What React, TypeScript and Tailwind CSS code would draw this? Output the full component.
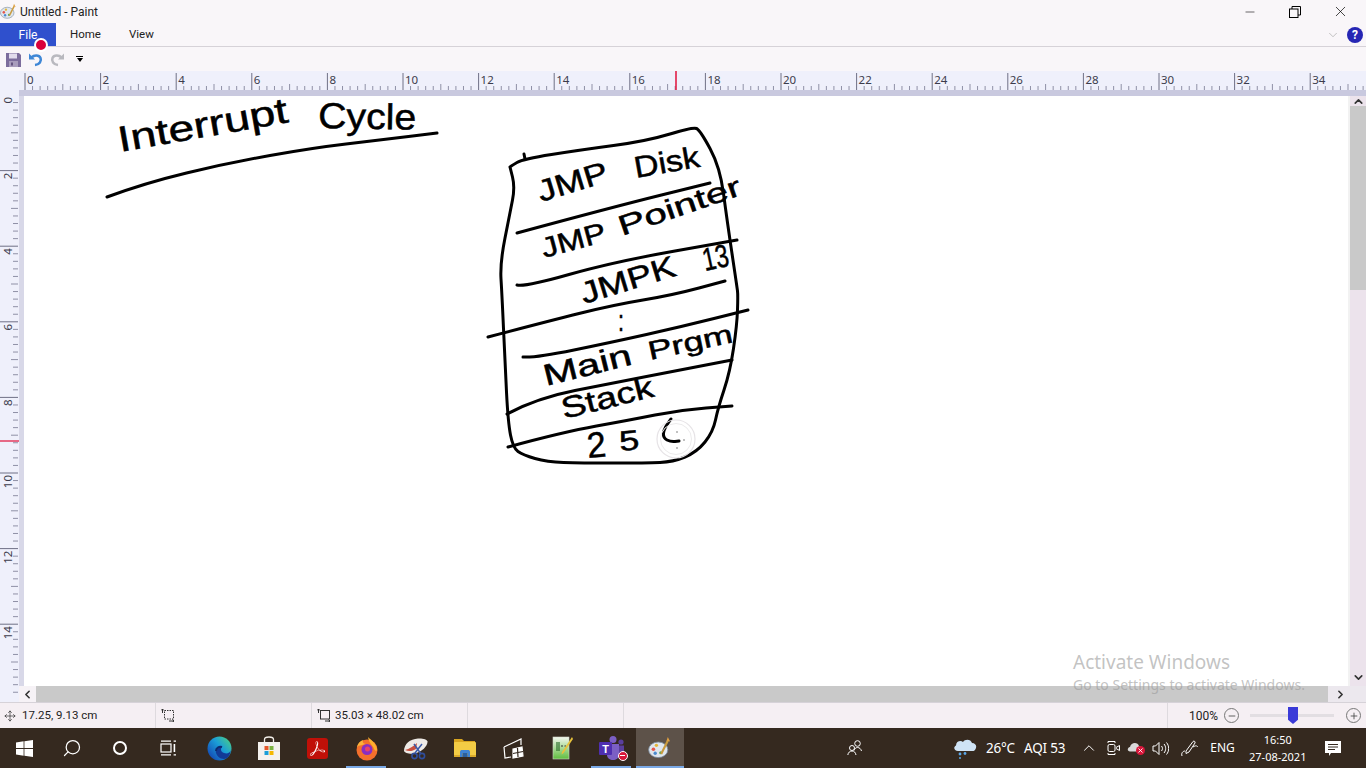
import { ChevronDown, ChevronLeft, ChevronRight, ChevronUp, Minus, Move, Plus, Search, X } from "lucide-react";
import { SiAdobeacrobatreader } from "react-icons/si";

type Pt = [number, number];

const uiFont = "font-['Noto_Sans',sans-serif]";
const chromeFont = "font-['Roboto',sans-serif]";
const PX_PER_CM = 37.8;

/** Ink strokes on the canvas (page coordinates). */
const strokes: Pt[][] = [
  // title underline
  [[107, 197], [145, 183], [228, 163], [312, 148], [380, 140], [437, 133]],
  // box outline
  [[510, 167], [511, 166], [523, 159], [580, 150], [647, 141], [693, 127], [700, 130], [720, 167], [727, 220], [737, 287], [738, 295], [737, 325], [730, 372], [718, 408], [713, 432], [697, 452], [673, 462], [647, 463], [580, 463], [547, 462], [523, 455], [513, 448], [508, 422], [505, 362], [502, 295], [500, 263], [510, 213], [515, 187], [510, 167]],
  [[524, 154], [525, 159]],
  // shelves
  [[517, 233], [613, 207], [710, 183]],
  [[517, 285], [525, 287], [613, 262], [737, 240]],
  [[488, 337], [545, 322], [613, 305], [673, 295], [725, 281]],
  [[523, 357], [535, 358], [613, 342], [680, 327], [748, 310]],
  [[507, 414], [537, 398], [613, 383], [680, 370], [732, 360]],
  [[508, 447], [563, 432], [630, 420], [680, 410], [732, 406]],
];

/** Handwritten words, as real text fitted to where they sit on the canvas. */
const words: { t: string; x: number; y: number; w: number; s: number; r: number }[] = [
  { t: "Interrupt", x: 120, y: 152, w: 172, s: 36, r: -10 },
  { t: "Cycle", x: 318, y: 128, w: 98, s: 36, r: 1 },
  { t: "JMP", x: 541, y: 202, w: 72, s: 30, r: -17 },
  { t: "Disk", x: 636, y: 178, w: 66, s: 30, r: -10 },
  { t: "JMP", x: 544, y: 258, w: 66, s: 28, r: -15 },
  { t: "Pointer", x: 622, y: 236, w: 128, s: 28, r: -19 },
  { t: "JMPK", x: 584, y: 304, w: 98, s: 30, r: -17 },
  { t: "13", x: 705, y: 271, w: 26, s: 32, r: -12 },
  { t: ":", x: 618, y: 331, w: 6, s: 30, r: 0 },
  { t: "Main", x: 546, y: 386, w: 90, s: 30, r: -14 },
  { t: "Prgm", x: 650, y: 360, w: 86, s: 26, r: -12 },
  { t: "Stack", x: 564, y: 419, w: 94, s: 30, r: -14 },
  { t: "2", x: 588, y: 458, w: 19, s: 36, r: -5 },
  { t: "5", x: 620, y: 451, w: 20, s: 28, r: -5 },
];

/** Rounds a list of points into a freehand-looking path. */
function smooth(pts: Pt[]) {
  let d = `M${pts[0][0]} ${pts[0][1]}`;
  for (let i = 1; i < pts.length - 1; i++) {
    const mx = (pts[i][0] + pts[i + 1][0]) / 2;
    const my = (pts[i][1] + pts[i + 1][1]) / 2;
    d += ` Q${pts[i][0]} ${pts[i][1]} ${mx} ${my}`;
  }
  const last = pts[pts.length - 1];
  return `${d} L${last[0]} ${last[1]}`;
}

function PaintIcon({ size = 18 }: { size?: number }) {
  return (
    <svg width={size} height={size} viewBox="0 0 20 20">
      <ellipse cx="8.5" cy="11.5" rx="8" ry="6.5" fill="#dfe6ee" stroke="#7a8a9c" strokeWidth="0.7" />
      <circle cx="4.5" cy="11" r="1.5" fill="#e4574c" />
      <circle cx="7" cy="7.8" r="1.4" fill="#e3b53c" />
      <circle cx="6" cy="14.4" r="1.4" fill="#4a8bd0" />
      <circle cx="10.6" cy="14" r="1.3" fill="#5aa65a" />
      <path d="M11 15 L16.5 4" stroke="#c99a3e" strokeWidth="1.8" />
      <path d="M15.5 4 L16.5 0.8 L18.4 4.6Z" fill="#e0a040" />
    </svg>
  );
}

function WinLogo() {
  return (
    <svg width="17" height="17" viewBox="0 0 17 17" fill="#fff">
      <path d="M0 2.4 7.6 1.3V8H0ZM8.4 1.2 17 0V8H8.4ZM0 9H7.6V15.7L0 14.6ZM8.4 9H17V17L8.4 15.8Z" />
    </svg>
  );
}

function TaskView() {
  return (
    <svg width="17" height="16" viewBox="0 0 17 16" fill="none" stroke="#fff" strokeWidth="1.2">
      <rect x="1" y="4" width="10" height="8" />
      <path d="M1 1.2H11M1 14.8H11" />
      <rect x="13.6" y="4" width="1.6" height="8" fill="#fff" stroke="none" />
      <path d="M13.6 1.2H16M13.6 14.8H16" />
    </svg>
  );
}

function Edge() {
  return (
    <svg width="25" height="25" viewBox="0 0 25 25">
      <defs>
        <linearGradient id="edgeG" x1="0.9" y1="0.1" x2="0.1" y2="0.8">
          <stop offset="0" stopColor="#45c98e" />
          <stop offset="0.45" stopColor="#1b9ed8" />
          <stop offset="1" stopColor="#1450b8" />
        </linearGradient>
      </defs>
      <circle cx="12.5" cy="12.5" r="12" fill="url(#edgeG)" />
      <path d="M24 14c-1 3-4 4-7 3-3-1-4-4-2-6-4-1-7 2-6 6 1 3 4 6 8 6 3 0 6-3 7-9Z" fill="#123a96" />
      <path d="M15 11c-3-1-6 1-6 4" stroke="#0c2a70" strokeWidth="2" fill="none" />
    </svg>
  );
}

function Store() {
  return (
    <svg width="24" height="24" viewBox="0 0 24 24">
      <path d="M7.5 6V3.4C7.5 1.8 9 1 12 1s4.5.8 4.5 2.4V6" fill="none" stroke="#f2eee8" strokeWidth="1.3" />
      <rect x="1" y="6" width="22" height="18" fill="#f4f1ee" />
      <rect x="7.5" y="10" width="4" height="4" fill="#e4582b" />
      <rect x="12.5" y="10" width="4" height="4" fill="#7cb342" />
      <rect x="7.5" y="15" width="4" height="4" fill="#1b9ed8" />
      <rect x="12.5" y="15" width="4" height="4" fill="#f5b800" />
    </svg>
  );
}

function Pdf() {
  return (
    <span className="flex h-[21px] w-[21px] items-center justify-center rounded-[3px] bg-[#c01008] text-white">
      <SiAdobeacrobatreader size={15} />
    </span>
  );
}

function Firefox() {
  return (
    <svg width="24" height="25" viewBox="0 0 24 25">
      <circle cx="12" cy="14" r="10.5" fill="#f4702c" />
      <path d="M13 1c3 3 8 6 9 12 0 3-2 2-3 0-1-4-5-5-6-12Z" fill="#fdb02e" />
      <path d="M2 11c1-4 3-6 6-7-1 3 1 4 4 4-4 1-8 1-10 3Z" fill="#fbb03b" />
      <circle cx="12" cy="13.5" r="5.5" fill="#8a2fc0" />
      <circle cx="12.5" cy="13" r="2.5" fill="#e9416b" />
    </svg>
  );
}

function Snip() {
  return (
    <svg width="25" height="23" viewBox="0 0 25 23">
      <path d="M1 14C1 7 7 2 15 1.5c5-.3 9 1 9.5 3 .5 4-6 11-13 12-5 .7-10-.5-10.5-2.5Z" fill="#eeeae6" />
      <path d="M2 13c4-1 9-4 12-7l-1 6c-3 2-7 3-11 1Z" fill="#c9503f" />
      <path d="M11 7 18 17M19 7 12 16" stroke="#3a5aa8" strokeWidth="1.5" />
      <circle cx="19" cy="19" r="2.6" fill="none" stroke="#2f4d9c" strokeWidth="1.6" />
      <circle cx="11.5" cy="19" r="2.6" fill="none" stroke="#2f4d9c" strokeWidth="1.6" />
    </svg>
  );
}

function Explorer() {
  return (
    <svg width="22" height="19" viewBox="0 0 22 19">
      <path d="M0 0H8L10 2H21V4H0Z" fill="#d9a520" />
      <rect y="3" width="22" height="15" rx="1" fill="#f3cc45" />
      <rect y="16" width="22" height="2" fill="#d9aa2a" />
      <path d="M6 18V13C6 11.5 7 11 8 11H14C15 11 16 11.5 16 13V18H13.5V14H8.5V18Z" fill="#3e83d3" />
      <rect x="8.5" y="14" width="5" height="4" fill="#2b5f9d" />
    </svg>
  );
}

function Whiteboard() {
  return (
    <svg width="21" height="21" viewBox="0 0 21 21" fill="none" stroke="#fff" strokeWidth="1.2">
      <path d="M1 9 18 1V7M1 9 2 20 8 19" />
      <path d="M10 11 19 9 20 18 10 20Z" fill="#fff" />
      <path d="M10 15.5 20 13.5M14.5 10 15 19" stroke="#33281f" />
    </svg>
  );
}

function Notepad() {
  return (
    <svg width="21" height="24" viewBox="0 0 21 24">
      <defs>
        <linearGradient id="noteG" x1="0" y1="0" x2="0" y2="1">
          <stop offset="0" stopColor="#f4f7ee" />
          <stop offset="1" stopColor="#5fbe3e" />
        </linearGradient>
      </defs>
      <rect x="1" y="1" width="16" height="22" fill="url(#noteG)" stroke="#cfd6c8" strokeWidth="0.6" />
      <path d="M5 6V15M7 6V15" stroke="#2c6e2c" strokeWidth="1.2" />
      <path d="M9 10H11M12.5 10H14" stroke="#333" strokeWidth="1.2" />
      <path d="M20 1 10 16 9.5 18.5 11.5 17 21 3Z" fill="#e8c23c" />
    </svg>
  );
}

function Teams() {
  return (
    <span className="relative flex h-[25px] w-[26px]">
      <svg width="26" height="25" viewBox="0 0 26 25">
        <circle cx="14" cy="3.5" r="3.5" fill="#7b5fc4" />
        <circle cx="22" cy="6" r="2.6" fill="#5a3f9e" />
        <path d="M18 9.5H25V17C25 19 23 20 21 20H18Z" fill="#5a3f9e" />
        <path d="M8 8H20V19C20 22 17 24 14 24 11 24 8 22 8 19Z" fill="#7b5fc4" />
        <rect x="0" y="6" width="13" height="13" rx="1" fill="#4f2fb0" />
        <text x="6.5" y="16.5" textAnchor="middle" fontSize="11" fontWeight="700" fill="#fff" fontFamily="Liberation Sans, sans-serif">T</text>
      </svg>
      <span className="absolute bottom-0 right-[-3px] flex h-[10px] w-[10px] items-center justify-center rounded-full border border-white bg-[#d8163a]">
        <span className="h-[1.5px] w-[5px] bg-white" />
      </span>
    </span>
  );
}

function QatSave() {
  return (
    <svg width="15" height="15" viewBox="0 0 15 15">
      <path d="M0 1H13L15 3V15H0Z" fill="#7c6d9c" />
      <rect x="3" y="1.5" width="8" height="5" fill="#e2dcec" />
      <rect x="3" y="9" width="9" height="6" fill="#a89cbc" />
      <rect x="5" y="10.5" width="2" height="3" fill="#645580" />
    </svg>
  );
}

function QatArrow({ color, flip }: { color: string; flip?: boolean }) {
  return (
    <svg width="15" height="15" viewBox="0 0 15 15" fill="none" className={flip ? "-scale-x-100" : ""}>
      <path d="M1 1.5V7.5H7Z" fill={color} />
      <path d="M3.5 5.5C6 2.8 11 2.8 12.5 6 13.8 9 11.5 12.5 7 13" stroke={color} strokeWidth="2.6" />
    </svg>
  );
}

function TopRuler() {
  const n = 181;
  return (
    <svg width="1347" height="19" viewBox="19 71 1347 19" className="block">
      {Array.from({ length: n }, (_, i) => {
        const x = 25 + i * (PX_PER_CM / 5);
        const major = i % 10 === 0;
        const mid = i % 5 === 0;
        return (
          <line key={i} x1={x} x2={x} y1={major ? 73 : mid ? 84 : 86} y2={90} stroke={major ? "#6f7086" : "#8f90a6"} strokeWidth="1" />
        );
      })}
      {Array.from({ length: 18 }, (_, i) => (
        <text key={i} x={25 + i * 2 * PX_PER_CM + 2} y={84} fontSize="11.5" fill="#3c3c4c" fontFamily="Noto Sans, sans-serif">
          {i * 2}
        </text>
      ))}
      <line x1="676" x2="676" y1="71" y2="90" stroke="#e0103a" strokeWidth="1.5" />
    </svg>
  );
}

function LeftRuler() {
  const n = 80;
  return (
    <svg width="19" height="606" viewBox="0 96 19 606" className="block">
      {Array.from({ length: n }, (_, i) => {
        const y = 95 + i * (PX_PER_CM / 5);
        const major = i % 10 === 0;
        const mid = i % 5 === 0;
        return (
          <line key={i} x1={major ? 0 : mid ? 11 : 13} x2={18} y1={y} y2={y} stroke={major ? "#6f7086" : "#8f90a6"} strokeWidth="1" />
        );
      })}
      {Array.from({ length: 8 }, (_, i) => {
        const y = 95 + i * 2 * PX_PER_CM + 2;
        return (
          <text key={i} x={0} y={0} fontSize="11.5" fill="#3c3c4c" textAnchor="end" fontFamily="Noto Sans, sans-serif" transform={`translate(12 ${y}) rotate(-90)`}>
            {i * 2}
          </text>
        );
      })}
      <line x1="0" x2="19" y1="441" y2="441" stroke="#e0103a" strokeWidth="1.2" />
    </svg>
  );
}

function Canvas() {
  return (
    <svg width="1324" height="590" viewBox="24 96 1324 590" className="block" fill="none">
      {strokes.map((s, i) => (
        <path key={i} d={smooth(s)} stroke="#000" strokeWidth="3" strokeLinecap="round" strokeLinejoin="round" />
      ))}
      {words.map((w, i) => (
        <text
          key={i}
          x={w.x}
          y={w.y}
          fontSize={w.s}
          textLength={w.w}
          lengthAdjust="spacingAndGlyphs"
          fill="#000"
          stroke="#000"
          strokeWidth="0.5"
          fontFamily="Liberation Sans, sans-serif"
          transform={`rotate(${w.r} ${w.x} ${w.y})`}
        >
          {w.t}
        </text>
      ))}
      {/* Half-written stroke under the pen, with the click rings around it */}
      <path d={smooth([[671, 419], [664, 428], [663, 438], [671, 442], [679, 441]])} stroke="#000" strokeWidth="3" strokeLinecap="round" />
      <circle cx="676" cy="439" r="19" stroke="#e6e3e6" strokeWidth="1.2" />
      <circle cx="676" cy="439" r="15.5" stroke="#ecebec" strokeWidth="1" />
      <circle cx="677" cy="432" r="0.7" fill="#555" />
      <circle cx="677" cy="448" r="0.7" fill="#555" />
      <circle cx="684" cy="440" r="0.7" fill="#555" />
    </svg>
  );
}

function VScroll() {
  return (
    <div className="flex w-[16px] flex-col bg-[#ece3ec]">
      <div className="flex h-[10px] items-center justify-center">
        <ChevronUp size={13} strokeWidth={3} className="text-[#333]" />
      </div>
      <div className="h-[184px] bg-[#c9c9c9]" />
      <div className="flex-1" />
      <div className="flex h-[18px] items-center justify-center">
        <ChevronDown size={13} strokeWidth={3} className="text-[#333]" />
      </div>
    </div>
  );
}

const taskIcons = [
  { el: <WinLogo />, cls: "w-[48px]" },
  { el: <Search size={20} strokeWidth={1.5} className="-scale-x-100 text-white" />, cls: "w-[48px]" },
  { el: <span className="h-[14px] w-[14px] rounded-full border-2 border-white" />, cls: "w-[48px]" },
  { el: <TaskView />, cls: "w-[48px] mr-[3px]" },
  { el: <Edge />, cls: "w-[49px]" },
  { el: <Store />, cls: "w-[49px]" },
  { el: <Pdf />, cls: "w-[49px]" },
  { el: <Firefox />, cls: "w-[49px]", open: true },
  { el: <Snip />, cls: "w-[49px]" },
  { el: <Explorer />, cls: "w-[49px]" },
  { el: <Whiteboard />, cls: "w-[49px]" },
  { el: <Notepad />, cls: "w-[49px]" },
  { el: <Teams />, cls: "w-[49px]", open: true },
  { el: <PaintIcon size={24} />, cls: "w-[48px] bg-[#5d5249]", active: true },
];

function Taskbar() {
  return (
    <div className={`flex h-[40px] items-center bg-[#35291f] text-white ${uiFont}`}>
      <div className="flex">
        {taskIcons.map((it, i) => (
          <div key={i} className={`relative flex h-[40px] items-center justify-center ${it.cls}`}>
            {it.el}
            {it.open && <span className="absolute bottom-0 left-[4px] right-[5px] h-[2px] bg-[#7aa9e6]" />}
            {it.active && <span className="absolute bottom-0 left-0 right-0 h-[2px] bg-[#7aa9e6]" />}
          </div>
        ))}
      </div>
      <div className="ml-[161px] flex w-[20px] justify-center">
        <svg width="16" height="16" viewBox="0 0 16 16" fill="none" stroke="#fff" strokeWidth="1">
          <circle cx="10.5" cy="3.5" r="2.8" />
          <path d="M7 10.5c.6-2 2-3 3.5-3 2 0 3.5 1.5 4 3.5" />
          <circle cx="5" cy="8" r="2.5" />
          <path d="M.8 15c.4-2.5 2-4 4.2-4s3.5 1.5 4 4" />
        </svg>
      </div>
      <div className="ml-[88px] flex w-[24px] justify-center">
        <svg width="24" height="21" viewBox="0 0 24 21">
          <path d="M5 13C1 13 0 9 3 7.5 3 3 8 2 10 4c2-3.5 8-3 9 1 4 0 5.5 4 3 7-.7 1-2 1-3 1Z" fill="#cfe3f5" />
          <circle cx="7" cy="16" r="1.4" fill="#5aa7e8" />
          <circle cx="12" cy="15.5" r="1.4" fill="#5aa7e8" />
          <circle cx="7" cy="20" r="1" fill="#5aa7e8" />
        </svg>
      </div>
      <span className="ml-[9px] text-[13.5px] tracking-[-0.2px]">26°C</span>
      <span className="ml-[9px] text-[13.5px] tracking-[-0.2px]">AQI 53</span>
      <ChevronUp size={18} strokeWidth={1.3} className="ml-[15px]" />
      <svg width="13" height="16" viewBox="0 0 13 16" fill="none" stroke="#fff" strokeWidth="1" className="ml-[9px]">
        <path d="M1 3V1.5H8V3M1 13V14.5H8V13" />
        <rect x="1" y="4.5" width="7" height="7" rx="1.5" />
        <path d="M9 7.5 12.5 5.5V10.5L9 8.5" />
      </svg>
      <span className="relative ml-[7px] flex h-[14px] w-[16px]">
        <svg width="16" height="11" viewBox="0 0 16 11" fill="#d9d9d9"><path d="M3 10.5C0 10.5 0 6.5 3 6 4 1 11 1 12 5c3 0 4 5.5 0 5.5Z" /></svg>
        <span className="absolute -right-[2px] bottom-0 flex h-[9px] w-[9px] items-center justify-center rounded-full bg-[#d8163a]">
          <X size={7} strokeWidth={3} className="text-white" />
        </span>
      </span>
      <svg width="17" height="15" viewBox="0 0 17 15" fill="none" stroke="#fff" strokeWidth="1" className="ml-[9px]">
        <path d="M1 5H3.5L7 1.5V13.5L3.5 10H1Z" />
        <path d="M9.5 5c1.3 1.5 1.3 3.5 0 5M12 3c2.2 2.5 2.2 6.5 0 9M14.5 1.5c2.9 3.5 2.9 8.5 0 12" />
      </svg>
      <svg width="18" height="18" viewBox="0 0 18 18" fill="none" stroke="#fff" strokeWidth="1" className="ml-[12px]">
        <path d="M5 12 12 2.5c1-1 2.5 0 2 1.5L8 13 5 14.5Z" />
        <path d="M1 17c-1-3 1-5 3-5M12 8c3-2 4-1 5 0" />
      </svg>
      <span className="ml-[11px] text-[12px]">ENG</span>
      <div className="ml-[13px] flex w-[60px] flex-col items-center whitespace-nowrap text-[11px] leading-[17px]">
        <span>16:50</span>
        <span>27-08-2021</span>
      </div>
      <div className="relative ml-[17px]">
        <svg width="16" height="15" viewBox="0 0 16 15" fill="#fff">
          <path d="M0 0H16V12H6L4 15V12H0Z" />
          <path d="M3 3.5H13M3 6H13M3 8.5H10" stroke="#35291f" strokeWidth="1" />
        </svg>
      </div>
    </div>
  );
}

export default function App() {
  return (
    <div className={`relative flex h-[768px] w-[1366px] flex-col overflow-hidden bg-[#f9f6f9] text-[12px] text-[#222] ${chromeFont}`}>
      {/* Title bar */}
      <div className="flex h-[23px] items-center">
        <PaintIcon size={17} />
        <span className="ml-[3px] text-[12px]">Untitled - Paint</span>
        <div className="ml-auto flex items-center">
          <Minus size={14} strokeWidth={1} className="mr-[32px] text-black" />
          <svg width="12" height="12" viewBox="0 0 12 12" fill="none" stroke="#000" strokeWidth="1" className="mr-[31px]">
            <rect x="0.5" y="3" width="8.5" height="8.5" />
            <path d="M3 3V.5H11.5V9H9" />
          </svg>
          <X size={17} strokeWidth={1} className="mr-[17px] text-black" />
        </div>
      </div>

      {/* Ribbon tabs */}
      <div className="flex h-[24px] items-stretch border-b border-[#d6d2d8]">
        <div className="flex w-[56px] items-center justify-center bg-[#2f50cd] pt-[1px] text-white">File</div>
        <div className="ml-[14px] flex items-center pt-[1px] text-[11.5px]">Home</div>
        <div className="ml-[28px] flex items-center pt-[1px] text-[11.5px]">View</div>
        <div className="ml-auto flex items-center">
          <ChevronDown size={14} strokeWidth={1} className="mr-[7px] text-[#9a9a9a]" />
          <span className="mr-[3px] flex h-[16px] w-[16px] items-center justify-center rounded-full bg-[#2626b4] text-[12px] font-bold text-white">?</span>
        </div>
      </div>

      {/* Quick access */}
      <div className="flex h-[24px] items-center pl-[6px]">
        <QatSave />
        <span className="ml-[7px]"><QatArrow color="#3f87d6" /></span>
        <span className="ml-[7px]"><QatArrow color="#b9b9bf" flip /></span>
        <span className="ml-[11px] flex flex-col items-center gap-[1px]">
          <span className="h-[1px] w-[7px] bg-black" />
          <span className="h-0 w-0 border-x-[3.5px] border-t-[4px] border-x-transparent border-t-black" />
        </span>
      </div>

      {/* Rulers and canvas */}
      <div className="flex flex-1 flex-col">
        <div className="flex h-[25px] flex-col bg-[#eff0fb]">
          <div className="flex h-[19px]">
            <div className="w-[19px]" />
            <TopRuler />
          </div>
          <div className="ml-[19px] h-[6px] bg-[#c9c9df]" />
        </div>
        <div className="flex flex-1">
          <div className="w-[19px] overflow-hidden bg-[#eff0fb]">
            <LeftRuler />
          </div>
          <div className="flex flex-1 flex-col">
            <div className="flex flex-1">
              <div className="w-[5px] bg-[#d8d8e8]" />
              <div className="w-[1324px] bg-white">
                <Canvas />
              </div>
              <div className="w-[2px] bg-[#f2f2f2]" />
              <VScroll />
            </div>
            <div className="flex h-[16px] bg-[#ece8ee]">
              <div className="flex w-[17px] items-center justify-center bg-[#f6f2f6]">
                <ChevronLeft size={13} strokeWidth={3} className="text-[#333]" />
              </div>
              <div className="w-[1292px] bg-[#c9c9c9]" />
              <div className="flex w-[25px] items-center justify-center">
                <ChevronRight size={13} strokeWidth={3} className="text-[#333]" />
              </div>
            </div>
          </div>
        </div>
      </div>

      {/* Status bar */}
      <div className="flex h-[26px] items-center border-t border-[#d6d2d8] bg-[#f5eff3] text-[11.5px]">
        <div className="flex h-full w-[156px] items-center border-r border-[#dedade] pl-[4px]">
          <Move size={12} strokeWidth={1.3} className="text-[#222]" />
          <span className="ml-[6px]">17.25, 9.13 cm</span>
        </div>
        <div className="flex h-full w-[156px] items-center border-r border-[#dedade] pl-[5px]">
          <svg width="14" height="13" viewBox="0 0 14 13" fill="none" stroke="#333" strokeWidth="1">
            <rect x="3.5" y="1.5" width="9" height="8.5" strokeDasharray="1.5 1" />
            <path d="M1.5 0V4M0 1.5 1.5 0 3 1.5M8 12H13M11.5 10.5 13 12 11.5 13" />
          </svg>
        </div>
        <div className="flex h-full w-[156px] items-center border-r border-[#dedade] pl-[5px]">
          <svg width="14" height="13" viewBox="0 0 14 13" fill="none" stroke="#333" strokeWidth="1">
            <rect x="3.5" y="1.5" width="9" height="8.5" />
            <path d="M1.5 0V4M0 1.5 1.5 0 3 1.5M8 12H13M11.5 10.5 13 12 11.5 13" />
          </svg>
          <span className="ml-[4px]">35.03 × 48.02 cm</span>
        </div>
        <div className="h-full w-[156px] border-r border-[#dedade]" />
        <div className="h-full w-[544px] border-r border-[#dedade]" />
        <span className="ml-[21px] w-[28px] text-[12px]">100%</span>
        <span className="ml-[7px] flex h-[15px] w-[15px] items-center justify-center rounded-full border border-[#777]">
          <Minus size={10} className="text-[#444]" />
        </span>
        <div className="relative ml-[11px] h-[3px] w-[84px] bg-[#e2dee2]">
          <span className="absolute -top-[7px] left-[38px] h-[17px] w-[10px] bg-[#3a3ad8] [clip-path:polygon(0_0,100%_0,100%_75%,50%_100%,0_75%)]" />
        </div>
        <span className="ml-[12px] flex h-[15px] w-[15px] items-center justify-center rounded-full border border-[#777]">
          <Plus size={10} className="text-[#444]" />
        </span>
      </div>

      <Taskbar />

      {/* Recording dot over the File tab */}
      <span className="absolute left-[34px] top-[38px] h-[14px] w-[14px] rounded-full border-2 border-white bg-[#d9003c]" />

      {/* Activation watermark */}
      <div className={`pointer-events-none absolute left-[1073px] top-[650px] text-[#9a9a9a]/60 ${uiFont}`}>
        <div className="text-[19px] leading-[24px]">Activate Windows</div>
        <div className="mt-[1px] text-[14px] leading-[20px]">Go to Settings to activate Windows.</div>
      </div>
    </div>
  );
}
